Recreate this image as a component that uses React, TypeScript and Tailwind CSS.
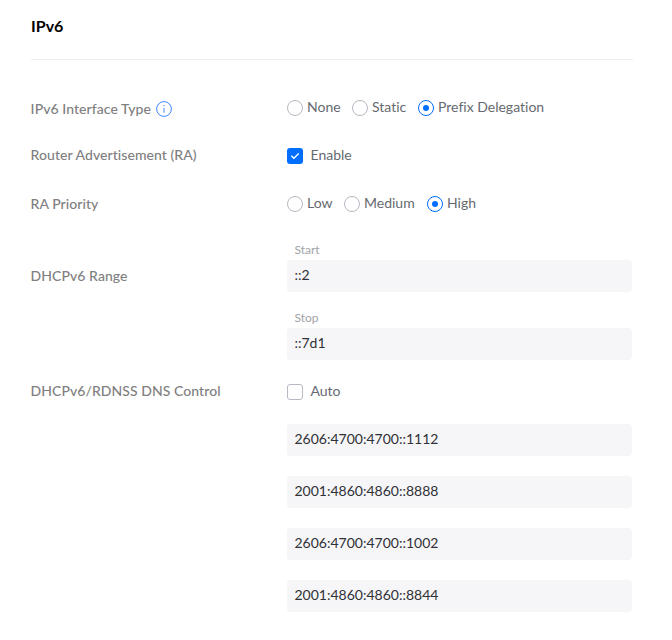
import React from "react";

const Radio = ({ label, on = false, className = "" }: { label: string; on?: boolean; className?: string }) => (
  <label className={`flex items-center ${className}`}>
    <span className={`mr-1 mt-px flex size-4 shrink-0 items-center justify-center rounded-full border bg-white ${on ? "border-[#006fff]" : "border-[#b9b9c4]"}`}>
      {on && <span className="size-1.5 rounded-full bg-[#006fff]" />}
    </span>
    <span className="whitespace-nowrap">{label}</span>
  </label>
);

const Field = ({ value }: { value: string }) => (
  <div className="flex h-8 w-[345px] items-center rounded bg-[#f6f6f8] pl-[7.5px] pb-0.5 text-[#303136]">{value}</div>
);

const Label = ({ children, className = "" }: { children: React.ReactNode; className?: string }) => (
  <div className={`flex w-[257px] shrink-0 items-center pl-[0.6px] text-sm font-medium tracking-[0.06px] text-[#808080] ${className}`}>{children}</div>
);

export default function App() {
  return (
    <main className="h-[640px] w-[672px] overflow-hidden bg-white pl-[30px] font-[Lato,sans-serif] text-sm leading-5 text-[#666a70] [font-variant-ligatures:none]">
      <header className="ml-px h-[60px] w-[602px] border-b border-[#ededf0] pt-4 text-base font-bold leading-5 text-black">IPv6</header>
      <div className="mt-[37px] flex h-5">
        <Label className="pt-1">
          IPv6 Interface Type
          <svg className="ml-[5.5px] mb-px" width="16" height="16" viewBox="0 0 16 16" fill="none" stroke="#3d88ff">
            <circle cx="8" cy="8" r="7.4" />
            <path d="M8 7v4.7M8 4v1.2" />
          </svg>
        </Label>
        <div className="flex">
          <Radio label="None" className="w-[65px]" />
          <Radio label="Static" className="w-[66px]" />
          <Radio label="Prefix Delegation" on />
        </div>
      </div>
      <div className="mt-7 flex h-5">
        <Label>Router Advertisement (RA)</Label>
        <div className="flex items-center">
          <svg className="mr-[7.5px] mt-0.5" width="16" height="16" viewBox="0 0 16 16" fill="none">
            <rect width="16" height="16" rx="3" fill="#006fff" />
            <path d="m4.3 7.7 2.6 2.6 4.8-4.8" stroke="white" strokeWidth="1.3" />
          </svg>
          Enable
        </div>
      </div>
      <div className="mt-7 flex h-5">
        <Label className="pt-0.5">RA Priority</Label>
        <div className="flex">
          <Radio label="Low" className="w-[57px]" />
          <Radio label="Medium" className="w-[83px]" />
          <Radio label="High" on />
        </div>
      </div>
      <div className="mt-[27px] flex h-[120px]">
        <div className="pt-[26px]"><Label>DHCPv6 Range</Label></div>
        <div>
          <div className="h-5 pl-[7.5px] text-xs leading-5 text-[#a1a3a8]">Start</div>
          <Field value="::2" />
          <div className="mt-4 h-5 pl-[7.5px] text-xs leading-5 text-[#a1a3a8]">Stop</div>
          <Field value="::7d1" />
        </div>
      </div>
      <div className="mt-[21px] flex">
        <Label>DHCPv6/RDNSS DNS Control</Label>
        <div className="flex h-5 items-center">
          <span className="mr-[7.5px] mt-0.5 size-4 rounded-[3px] border border-[#b9b9c4]" />
          Auto
        </div>
      </div>
      <div className="ml-[257px] mt-[23px] flex flex-col gap-5">
        <Field value="2606:4700:4700::1112" />
        <Field value="2001:4860:4860::8888" />
        <Field value="2606:4700:4700::1002" />
        <Field value="2001:4860:4860::8844" />
      </div>
    </main>
  );
}
